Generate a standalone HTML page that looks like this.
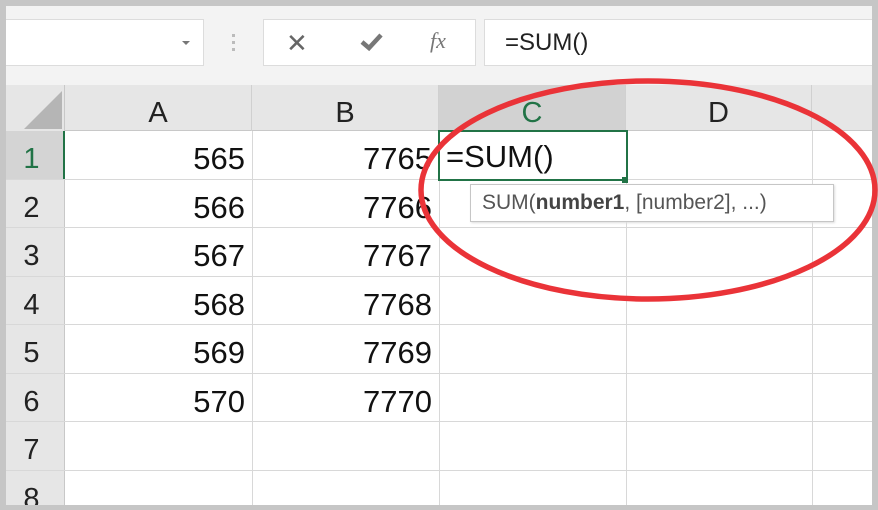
<!DOCTYPE html>
<html><head><style>
*{margin:0;padding:0;box-sizing:border-box}
body{width:878px;height:510px;overflow:hidden;background:#c6c6c6;font-family:"Liberation Sans",sans-serif;position:relative}
.a{position:absolute}
.r{position:relative;height:48.5px;border-bottom:1px solid #d8d8d8}
.h{position:absolute;left:0;width:51px;text-align:center;top:12px;font-size:29px;color:#222}
.x{position:absolute;right:627px;top:10px;font-size:31px;color:#111}
.y{position:absolute;right:440px;top:10px;font-size:31px;color:#111}
</style></head><body>
<div class="a" style="left:6px;top:6px;width:866px;height:499px;background:#fff;overflow:hidden">
 <div class="a" style="left:0;top:0;width:866px;height:79px;background:#f3f3f3"></div>
 <div class="a" style="left:0;top:13px;width:198px;height:47px;background:#fff;border:1px solid #dcdcdc;border-left:none"></div>
 <div class="a" style="left:176px;top:35px;width:0;height:0;border-left:4px solid transparent;border-right:4px solid transparent;border-top:4px solid #777"></div>
 <div class="a" style="left:226px;top:28px;width:3px;height:3px;background:#bbb;box-shadow:0 7px 0 #bbb,0 14px 0 #bbb"></div>
 <div class="a" style="left:257px;top:13px;width:213px;height:47px;background:#fff;border:1px solid #dcdcdc"></div>
 <div class="a" style="left:280px;top:25px;font-size:26px;color:#666;line-height:24px">✕</div>
 <svg class="a" style="left:353px;top:25px" width="26" height="22"><path d="M3 11 L10 17 L22 4" stroke="#777" stroke-width="4.5" fill="none"/></svg>
 <div class="a" style="left:424px;top:22px;font-family:'Liberation Serif',serif;font-style:italic;font-size:22px;color:#777">fx</div>
 <div class="a" style="left:478px;top:13px;width:390px;height:47px;background:#fff;border:1px solid #dcdcdc;font-size:24px;line-height:45px;padding-left:20px;color:#222">=SUM()</div>
 <div class="a" style="left:0;top:79px;width:866px;height:46px;background:#e6e6e6;border-bottom:1px solid #c8c8c8"></div>
 <div class="a" style="left:0;top:79px;width:59px;height:420px;background:#e6e6e6;border-right:1px solid #c8c8c8"></div>
 <div class="a" style="left:18px;top:85px;width:0;height:0;border-left:38px solid transparent;border-bottom:38px solid #b5b5b5"></div>
 <div class="a" style="left:433px;top:79px;width:187px;height:46px;background:#d2d2d2"></div>
 <div class="a" style="left:59px;top:79px;width:187px;height:46px;font-size:29px;line-height:56px;text-align:center;color:#222;border-right:1px solid #d0d0d0">A</div>
 <div class="a" style="left:246px;top:79px;width:187px;height:46px;font-size:29px;line-height:56px;text-align:center;color:#222;border-right:1px solid #d0d0d0">B</div>
 <div class="a" style="left:433px;top:79px;width:187px;height:46px;font-size:29px;line-height:56px;text-align:center;color:#217346;border-right:1px solid #d0d0d0">C</div>
 <div class="a" style="left:620px;top:79px;width:186px;height:46px;font-size:29px;line-height:56px;text-align:center;color:#222;border-right:1px solid #d0d0d0">D</div>
 <div class="a" style="left:246px;top:125px;width:1px;height:380px;background:#d8d8d8"></div>
 <div class="a" style="left:433px;top:125px;width:1px;height:380px;background:#d8d8d8"></div>
 <div class="a" style="left:620px;top:125px;width:1px;height:380px;background:#d8d8d8"></div>
 <div class="a" style="left:806px;top:125px;width:1px;height:380px;background:#d8d8d8"></div>
 <div class="a" style="left:0;top:125px;width:59px;height:49px;background:#d4d4d4;border-right:2px solid #217346"></div>
 <div class="a" style="left:0;top:125px;width:866px">
  <div class="r"><span class="h" style="color:#217346">1</span><span class="x">565</span><span class="y">7765</span></div>
  <div class="r"><span class="h">2</span><span class="x">566</span><span class="y">7766</span></div>
  <div class="r"><span class="h">3</span><span class="x">567</span><span class="y">7767</span></div>
  <div class="r"><span class="h">4</span><span class="x">568</span><span class="y">7768</span></div>
  <div class="r"><span class="h">5</span><span class="x">569</span><span class="y">7769</span></div>
  <div class="r"><span class="h">6</span><span class="x">570</span><span class="y">7770</span></div>
  <div class="r"><span class="h">7</span></div>
  <div class="r"><span class="h">8</span></div>
 </div>
 <div class="a" style="left:432px;top:124px;width:190px;height:51px;border:2px solid #217346;background:#fff;font-size:31px;line-height:50px;padding-left:6px;color:#111">=SUM()</div>
 <div class="a" style="left:616px;top:171px;width:6px;height:6px;background:#217346"></div>
 <div class="a" style="left:464px;top:178px;width:364px;height:38px;background:#fff;border:1px solid #c6c6c6;box-shadow:1px 1px 2px #ddd;font-size:21px;line-height:36px;padding-left:11px;color:#555">SUM(<b style="color:#444">number1</b>, [number2], ...)</div>
</div>
<svg class="a" style="left:0;top:0" width="878" height="510"><ellipse cx="648" cy="190" rx="227" ry="109" fill="none" stroke="#ea3338" stroke-width="5.5"/></svg>
</body></html>
